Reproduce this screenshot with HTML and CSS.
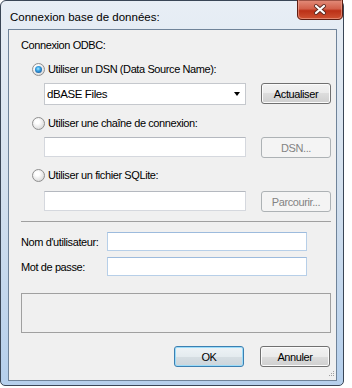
FILE: index.html
```html
<!DOCTYPE html>
<html lang="fr">
<head>
    <meta charset="UTF-8">
    <meta name="viewport" content="width=device-width, initial-scale=1.0">
    <title>Connexion base de données</title>
    <link rel="stylesheet" href="styles.css">
</head>
<body>
    <div class="window">
        <div class="titlebar">
            <span class="title">Connexion base de données:</span>
            <svg class="close" width="46" height="20" viewBox="0 0 46 20" role="button" aria-label="Fermer">
                <defs>
                    <linearGradient id="red" x1="0" y1="0" x2="0" y2="1">
                        <stop offset="0" stop-color="#e38d7b"/>
                        <stop offset="0.45" stop-color="#d2604a"/>
                        <stop offset="0.55" stop-color="#bb3017"/>
                        <stop offset="1" stop-color="#cf5434"/>
                    </linearGradient>
                </defs>
                <path d="M0.5 0 V15 Q0.5 19.5 5 19.5 H41 Q45.5 19.5 45.5 15 V0 Z" fill="url(#red)" stroke="#5e1d12"/>
                <path d="M1.5 0 V15 Q1.5 18.5 5 18.5 H41 Q44.5 18.5 44.5 15 V0" fill="none" stroke="#f0a896" stroke-opacity="0.6"/>
                <path d="M19 6 L27 13 M27 6 L19 13" stroke="#5a2a22" stroke-width="4" stroke-linecap="round"/>
                <path d="M19 6 L27 13 M27 6 L19 13" stroke="#ffffff" stroke-width="2.2" stroke-linecap="round"/>
            </svg>
        </div>
        <form class="client">
            <div class="section-label">Connexion ODBC:</div>

            <!-- DSN -->
            <label class="radio-row r1"><span class="radio checked"></span>Utiliser un DSN (Data Source Name):</label>
            <div class="field-row f1">
                <div class="combo"><span>dBASE Files</span><span class="arrow"></span></div>
                <button type="button" class="btn">Actualiser</button>
            </div>

            <!-- chaine de connexion -->
            <label class="radio-row r2"><span class="radio"></span>Utiliser une chaîne de connexion:</label>
            <div class="field-row f2">
                <input type="text" class="textbox">
                <button type="button" class="btn" disabled>DSN...</button>
            </div>

            <!-- SQLite -->
            <label class="radio-row r3"><span class="radio"></span>Utiliser un fichier SQLite:</label>
            <div class="field-row f3">
                <input type="text" class="textbox">
                <button type="button" class="btn" disabled>Parcourir...</button>
            </div>

            <div class="separator"></div>

            <div class="login-row l1">
                <label for="user">Nom d'utilisateur:</label>
                <input type="text" id="user" class="textbox blue">
            </div>
            <div class="login-row l2">
                <label for="pass">Mot de passe:</label>
                <input type="password" id="pass" class="textbox blue">
            </div>

            <div class="status-box"></div>

            <div class="button-row">
                <button type="submit" class="btn default">OK</button>
                <button type="button" class="btn">Annuler</button>
            </div>
            <div class="grip-row">
                <svg width="7" height="7" viewBox="0 0 7 7" class="grip">
                    <rect x="5" y="1" width="1" height="1" fill="#a0a0a0"/>
                    <rect x="3" y="3" width="1" height="1" fill="#a0a0a0"/>
                    <rect x="5" y="3" width="1" height="1" fill="#a0a0a0"/>
                    <rect x="1" y="5" width="1" height="1" fill="#a0a0a0"/>
                    <rect x="3" y="5" width="1" height="1" fill="#a0a0a0"/>
                    <rect x="5" y="5" width="1" height="1" fill="#a0a0a0"/>
                </svg>
            </div>
        </form>
    </div>
</body>
</html>
```

FILE: styles.css
```css
body {
    margin: 0;
    background: #ffffff;
    font-family: "Liberation Sans", Arial, sans-serif;
    font-size: 11px;
    letter-spacing: -0.4px;
    color: #000000;
}
.window {
    width: 344px;
    height: 386px;
    box-sizing: border-box;
    border: 1px solid #3a4656;
    border-radius: 6px 6px 5px 5px;
    background: linear-gradient(#e8eef5, #d3e0ee 50%, #b5cfec);
    display: flex;
    flex-direction: column;
}
.titlebar {
    height: 28px;
    display: flex;
    align-items: flex-start;
}
.title {
    font-size: 11.5px;
    letter-spacing: 0;
    margin: 10px 0 0 9px;
    color: #000000;
}
.close {
    display: block;
    margin: -1px 0 0 auto;
}
.client {
    width: 329px;
    height: 352px;
    box-sizing: border-box;
    margin: 0 0 0 7px;
    padding: 9px 5px 0 12px;
    border: 1px solid #6f8399;
    background: #f0f0f0;
    display: flex;
    flex-direction: column;
}
.section-label {
    line-height: 13px;
    height: 13px;
}
.radio-row {
    display: flex;
    align-items: center;
    height: 14px;
    line-height: 14px;
}
.r1 { margin-top: 10px; }
.r2 { margin-top: 11px; }
.r3 { margin-top: 10px; }
.radio {
    width: 13px;
    height: 13px;
    box-sizing: border-box;
    margin: 0 3px 0 11px;
    border: 1px solid #8f8f8f;
    border-radius: 50%;
    background: radial-gradient(circle at 40% 35%, #ffffff 20%, #e6e6e6 60%, #cccccc);
    display: flex;
    align-items: center;
    justify-content: center;
}
.radio.checked::after {
    content: "";
    width: 7px;
    height: 7px;
    border-radius: 50%;
    background: radial-gradient(circle at 45% 40%, #a8ecff 0, #3aa4e6 35%, #1a5b9c 80%, #153f6e);
}
.field-row {
    display: flex;
    align-items: flex-start;
    padding-left: 23px;
}
.f1 { margin-top: 7px; }
.f2 { margin-top: 7px; }
.f3 { margin-top: 9px; }
.combo {
    width: 202px;
    height: 22px;
    box-sizing: border-box;
    border: 1px solid #c5c8cd;
    background: #ffffff;
    display: flex;
    align-items: center;
    justify-content: space-between;
    padding: 0 5px 0 2px;
    font-size: 11.5px;
}
.arrow {
    width: 0;
    height: 0;
    border-left: 3.5px solid transparent;
    border-right: 3.5px solid transparent;
    border-top: 4px solid #000000;
}
.textbox {
    width: 202px;
    height: 20px;
    box-sizing: border-box;
    margin: 0;
    padding: 0 3px;
    border: 1px solid #d5d8de;
    border-top-color: #b4b8bf;
    background: #ffffff;
    font: inherit;
}
.textbox.blue {
    width: 200px;
    height: 19px;
    border-color: #b7cfe8;
    border-top-color: #9dbbdd;
}
.btn {
    width: 70px;
    height: 21px;
    box-sizing: border-box;
    padding: 0;
    border: 1px solid #707070;
    border-radius: 3px;
    background: linear-gradient(#f2f2f2, #ebebeb 50%, #dddddd 50%, #cfcfcf);
    box-shadow: inset 0 0 0 1px #fbfbfb;
    font: inherit;
    letter-spacing: -0.4px;
    color: #000000;
}
.field-row .btn {
    margin-left: 15px;
}
.btn:disabled {
    border-color: #adb2b5;
    background: #f4f4f4;
    box-shadow: none;
    color: #838383;
}
.btn.default {
    border-color: #3c7fb1;
    box-shadow: inset 0 0 0 1px #9bdcf9;
    background: linear-gradient(#eef3f6, #e4ebef 50%, #d6dee3 50%, #ccd5db);
}
.separator {
    margin-top: 9px;
    width: 310px;
    height: 1px;
    background: #a0a0a0;
}
.login-row {
    display: flex;
    align-items: center;
    height: 19px;
}
.login-row label {
    width: 86px;
}
.l1 { margin-top: 10px; }
.l2 { margin-top: 6px; }
.status-box {
    margin-top: 17px;
    width: 310px;
    height: 40px;
    box-sizing: border-box;
    border: 1px solid #a0a0a0;
}
.button-row {
    margin-top: 13px;
    padding-right: 1px;
    display: flex;
    justify-content: flex-end;
    gap: 16px;
}
.grip-row {
    margin: 3px -4px 0 0;
    display: flex;
    justify-content: flex-end;
}
```
